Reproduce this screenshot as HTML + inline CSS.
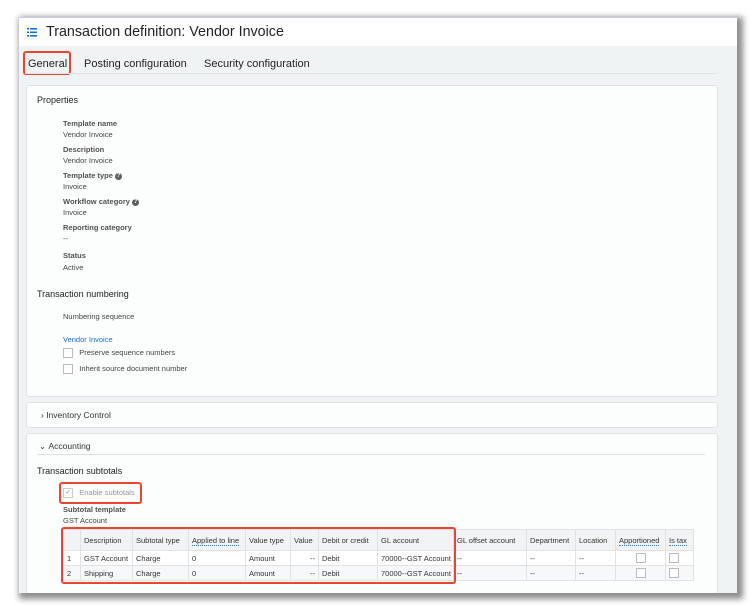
<!DOCTYPE html><html><head><style>
body{margin:0;width:754px;height:606px;background:#fff;font-family:"Liberation Sans",sans-serif;position:relative;overflow:hidden;color:#222}
.win{position:absolute;left:19px;top:17px;width:718px;height:575px;background:#f0f3f4;box-shadow:3px 3px 6px 3px rgba(0,0,0,.45);overflow:hidden;border-top:1px solid #ccd}
.hdr{position:absolute;left:0;top:0;width:718px;height:28px;background:#fff}
.abs{position:absolute;white-space:nowrap}
.card{position:absolute;left:7px;width:690px;background:#fcfdfd;border:1px solid #dde2e5;border-radius:3px}
.lb{font-size:7.5px;color:#333;font-weight:bold;opacity:.85}
.v{font-size:7.5px;color:#444}
.red{position:absolute;border:2px solid #e8462e;border-radius:3px}
table{border-collapse:collapse;table-layout:fixed;font-size:7.5px;color:#333;position:absolute;left:44px;top:511px;width:630px}
td,th{border:1px solid #dfe3e6;padding:0 3px;white-space:nowrap;overflow:hidden;font-weight:normal;text-align:left}
th{height:20px;background:#f1f3f4}
td{height:14px;background:#fff}
tr.alt td{background:#f6f8f9}
.cb{display:inline-block;width:8px;height:8px;border:1px solid #bbb;background:#fff;vertical-align:middle}
.u{border-bottom:1px dotted #3a7bd5}
.q{display:inline-block;width:7px;height:7px;border-radius:50%;background:#444;color:#fff;font-size:6px;line-height:7px;text-align:center;vertical-align:middle}
</style></head><body>
<div class="win">
<div class="hdr">
<svg class="abs" style="left:8px;top:10px" width="10" height="9"><g fill="#1a6fd1"><rect x="0" y="0" width="2" height="1.6"/><rect x="3" y="0" width="7" height="1.6"/><rect x="0" y="3.5" width="2" height="1.6"/><rect x="3" y="3.5" width="7" height="1.6"/><rect x="0" y="7" width="2" height="1.6"/><rect x="3" y="7" width="7" height="1.6"/></g></svg>
<div class="abs" style="left:27px;top:6px;font-size:14.3px;color:#222">Transaction definition: Vendor Invoice</div>
</div>
<div class="abs" style="left:9px;top:40px;font-size:11px">General</div>
<div class="abs" style="left:65px;top:40px;font-size:11px">Posting configuration</div>
<div class="abs" style="left:185px;top:40px;font-size:11px">Security configuration</div>
<div class="red" style="left:4px;top:33px;width:44px;height:20px"></div>
<div class="abs" style="left:6px;top:55px;width:692px;height:1px;background:#dde2e5"></div>
<div class="card" style="top:67px;height:310px"></div>
<div class="abs" style="left:18px;top:77px;font-size:9px">Properties</div>
<div class="abs lb" style="left:44px;top:101px">Template name</div><div class="abs v" style="left:44px;top:112px">Vendor Invoice</div>
<div class="abs lb" style="left:44px;top:127px">Description</div><div class="abs v" style="left:44px;top:138px">Vendor Invoice</div>
<div class="abs lb" style="left:44px;top:153px">Template type <span class="q">?</span></div><div class="abs v" style="left:44px;top:164px">Invoice</div>
<div class="abs lb" style="left:44px;top:179px">Workflow category <span class="q">?</span></div><div class="abs v" style="left:44px;top:190px">Invoice</div>
<div class="abs lb" style="left:44px;top:205px">Reporting category</div><div class="abs v" style="left:44px;top:216px">--</div>
<div class="abs lb" style="left:44px;top:233px">Status</div><div class="abs v" style="left:44px;top:245px">Active</div>
<div class="abs" style="left:18px;top:271px;font-size:9px">Transaction numbering</div>
<div class="abs v" style="left:44px;top:294px">Numbering sequence</div>
<div class="abs v" style="left:44px;top:317px;color:#1a6fd1">Vendor Invoice</div>
<div class="abs v" style="left:44px;top:330px"><span class="cb"></span>&nbsp;&nbsp;&nbsp;Preserve sequence numbers</div>
<div class="abs v" style="left:44px;top:346px"><span class="cb"></span>&nbsp;&nbsp;&nbsp;Inherit source document number</div>
<div class="card" style="top:384px;height:24px"></div>
<div class="abs" style="left:22px;top:392px;font-size:8.5px;color:#333">›&nbsp;Inventory Control</div>
<div class="card" style="top:415px;height:170px"></div>
<div class="abs" style="left:20px;top:423px;font-size:8.5px;color:#333">⌄&nbsp;Accounting</div>
<div class="abs" style="left:18px;top:436px;width:668px;height:1px;background:#dde2e5"></div>
<div class="abs" style="left:18px;top:448px;font-size:9px">Transaction subtotals</div>
<div class="abs v" style="left:44px;top:470px;color:#999"><span class="cb" style="border-color:#ccc;color:#6aa0e0;font-size:7px;line-height:8px;text-align:center">✓</span>&nbsp;&nbsp;&nbsp;Enable subtotals</div>
<div class="red" style="left:40px;top:464px;width:79px;height:18px"></div>
<div class="abs lb" style="left:44px;top:487px">Subtotal template</div><div class="abs v" style="left:44px;top:498px">GST Account</div>
<table>
<colgroup><col style="width:17px"><col style="width:52px"><col style="width:56px"><col style="width:57px"><col style="width:45px"><col style="width:28px"><col style="width:59px"><col style="width:76px"><col style="width:73px"><col style="width:49px"><col style="width:40px"><col style="width:50px"><col style="width:28px"></colgroup>
<tr><th></th><th>Description</th><th>Subtotal type</th><th><span class="u">Applied to line</span></th><th>Value type</th><th>Value</th><th>Debit or credit</th><th>GL account</th><th>GL offset account</th><th>Department</th><th>Location</th><th><span class="u">Apportioned</span></th><th><span class="u">Is tax</span></th></tr>
<tr><td>1</td><td>GST Account</td><td>Charge</td><td>0</td><td>Amount</td><td style="text-align:right">--</td><td>Debit</td><td>70000--GST Account</td><td>--</td><td>--</td><td>--</td><td style="text-align:center"><span class="cb"></span></td><td><span class="cb"></span></td></tr>
<tr class="alt"><td>2</td><td>Shipping</td><td>Charge</td><td>0</td><td>Amount</td><td style="text-align:right">--</td><td>Debit</td><td>70000--GST Account</td><td>--</td><td>--</td><td>--</td><td style="text-align:center"><span class="cb"></span></td><td><span class="cb"></span></td></tr>
</table>
<div class="red" style="left:42px;top:509px;width:391px;height:53px"></div>
</div>
</body></html>
